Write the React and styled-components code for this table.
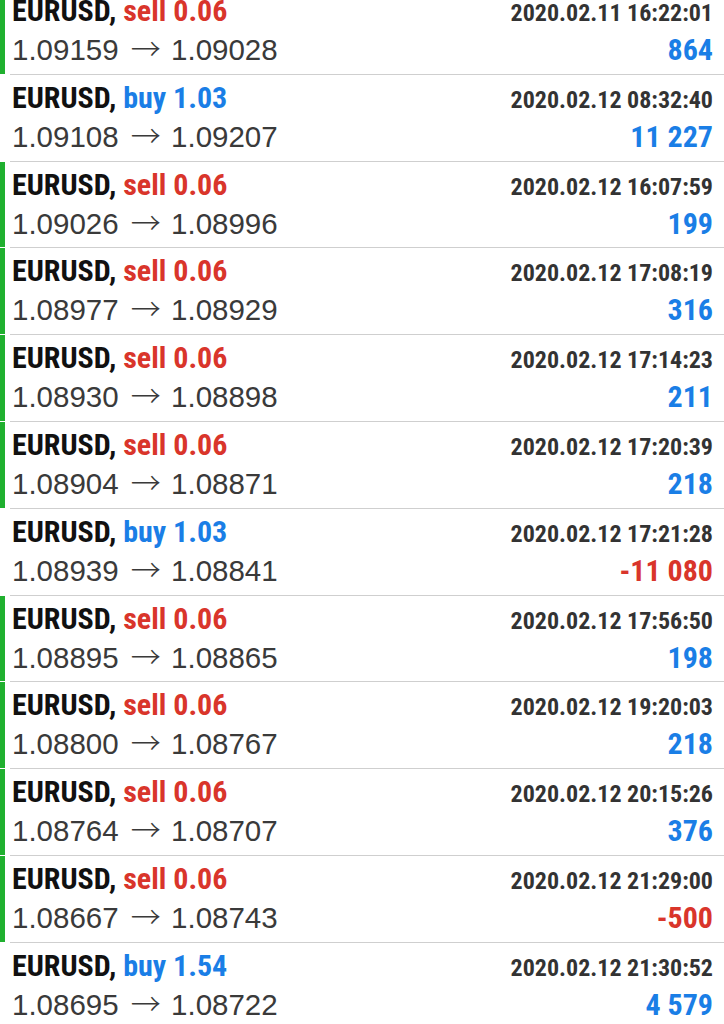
import React from "react";
import styled, { createGlobalStyle } from "styled-components";

const GlobalStyle = createGlobalStyle`
  html, body {
    margin: 0;
    padding: 0;
    background: #ffffff;
    overflow: hidden;
  }
`;

const List = styled.div`
  margin-top: -12px;
  font-family: "Liberation Sans", Arial, sans-serif;
`;

const Row = styled.div`
  display: flex;
  height: 86.8px;
  box-sizing: border-box;
`;

const Marker = styled.div`
  width: 5px;
  margin-bottom: 1px;
  background-color: ${({ active }) => (active ? "#20b02f" : "transparent")};
`;

const Content = styled.div`
  flex: 1;
  margin-left: 5px;
  padding: 3px 11px 0 2px;
  border-bottom: 1px solid #cfcfcf;
`;

const Line = styled.div`
  display: flex;
  align-items: baseline;
  justify-content: space-between;
  height: 39px;
  line-height: 39px;
  white-space: nowrap;
`;

const BottomLine = styled(Line)`
  margin-top: -2px;
`;

const Condensed = styled.span`
  font-family: Roboto, "Liberation Sans", sans-serif;
  font-stretch: condensed;
  font-weight: 700;
`;

const Title = styled(Condensed)`
  font-size: 30px;
  color: #111111;
`;

const Side = styled.span`
  color: ${({ type }) => (type === "buy" ? "#1a7ee6" : "#d9352b")};
`;

const Time = styled(Condensed)`
  font-size: 24px;
  color: #333333;
`;

const Prices = styled.span`
  font-size: 29.5px;
  color: #3a3a3a;
`;

const Arrow = styled.span`
  display: inline-block;
  margin: 0 2px 0 4px;
  font-family: "Noto Sans CJK SC", sans-serif;
  font-size: 30px;
  font-weight: 300;
`;

const Profit = styled(Condensed)`
  font-size: 30px;
  color: ${({ negative }) => (negative ? "#d9352b" : "#1a7ee6")};
`;

const trades = [
  ["sell", "0.06", "2020.02.11 16:22:01", "1.09159", "1.09028", "864"],
  ["buy", "1.03", "2020.02.12 08:32:40", "1.09108", "1.09207", "11 227"],
  ["sell", "0.06", "2020.02.12 16:07:59", "1.09026", "1.08996", "199"],
  ["sell", "0.06", "2020.02.12 17:08:19", "1.08977", "1.08929", "316"],
  ["sell", "0.06", "2020.02.12 17:14:23", "1.08930", "1.08898", "211"],
  ["sell", "0.06", "2020.02.12 17:20:39", "1.08904", "1.08871", "218"],
  ["buy", "1.03", "2020.02.12 17:21:28", "1.08939", "1.08841", "-11 080"],
  ["sell", "0.06", "2020.02.12 17:56:50", "1.08895", "1.08865", "198"],
  ["sell", "0.06", "2020.02.12 19:20:03", "1.08800", "1.08767", "218"],
  ["sell", "0.06", "2020.02.12 20:15:26", "1.08764", "1.08707", "376"],
  ["sell", "0.06", "2020.02.12 21:29:00", "1.08667", "1.08743", "-500"],
  ["buy", "1.54", "2020.02.12 21:30:52", "1.08695", "1.08722", "4 579"],
];

const App = () => {
  return (
    <>
      <GlobalStyle />
      <List>
        {trades.map(([type, volume, time, open, close, profit], index) => (
          <Row key={index}>
            <Marker active={type === "sell"} />
            <Content>
              <Line>
                <Title>
                  EURUSD, <Side type={type}>{type} {volume}</Side>
                </Title>
                <Time>{time}</Time>
              </Line>
              <BottomLine>
                <Prices>
                  {open} <Arrow>→</Arrow> {close}
                </Prices>
                <Profit negative={profit.startsWith("-")}>{profit}</Profit>
              </BottomLine>
            </Content>
          </Row>
        ))}
      </List>
    </>
  );
};

export default App;
